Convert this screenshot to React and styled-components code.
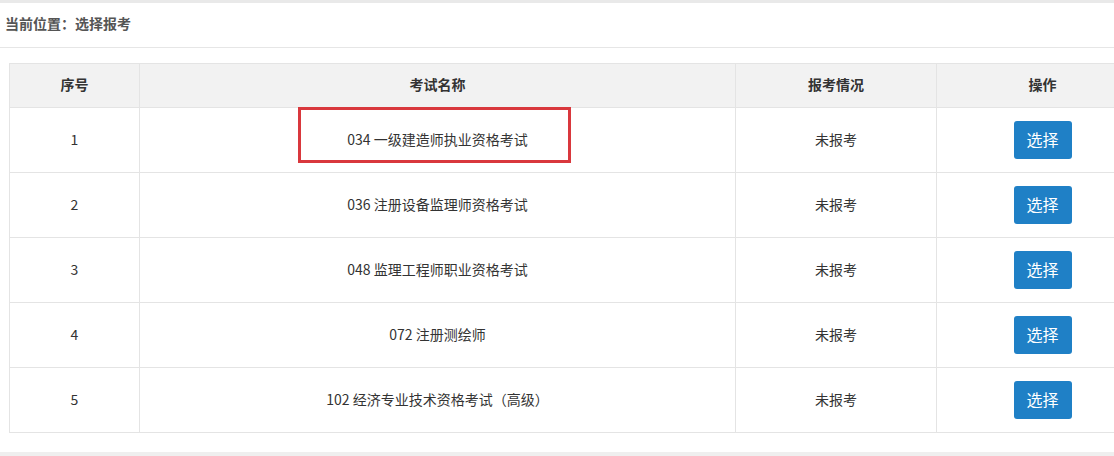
import React from "react";
import styled, { createGlobalStyle } from "styled-components";

const exams = [
  { id: 1, name: "034 一级建造师执业资格考试", marked: true },
  { id: 2, name: "036 注册设备监理师资格考试" },
  { id: 3, name: "048 监理工程师职业资格考试" },
  { id: 4, name: "072 注册测绘师" },
  { id: 5, name: "102 经济专业技术资格考试（高级）" },
];

function App() {
  return (
    <>
      <GlobalStyle />
      <Page>
        <Breadcrumb>当前位置：选择报考</Breadcrumb>
        <Content>
          <Table>
            <colgroup>
              <col style={{ width: 130 }} />
              <col style={{ width: 596 }} />
              <col style={{ width: 201 }} />
              <col style={{ width: 212 }} />
            </colgroup>
            <thead>
              <tr>
                <Th>序号</Th>
                <Th>考试名称</Th>
                <Th>报考情况</Th>
                <Th>操作</Th>
              </tr>
            </thead>
            <tbody>
              {exams.map((exam) => (
                <tr key={exam.id}>
                  <Td>{exam.id}</Td>
                  <NameCell>
                    {exam.name}
                    {exam.marked && <Highlight />}
                  </NameCell>
                  <Td>未报考</Td>
                  <ActionCell>
                    <SelectButton>选择</SelectButton>
                  </ActionCell>
                </tr>
              ))}
            </tbody>
          </Table>
        </Content>
        <Footer />
      </Page>
    </>
  );
}

const GlobalStyle = createGlobalStyle`
  body {
    margin: 0;
    background: #fff;
    overflow: hidden;
    font-family: "Noto Sans CJK SC", "Liberation Sans", sans-serif;
  }
`;

const Page = styled.div`
  width: 1160px;
  border-top: 3px solid #e9e9e9;
`;

const Breadcrumb = styled.div`
  height: 45px;
  box-sizing: border-box;
  padding: 0 0 4px 5px;
  display: flex;
  align-items: center;
  font-size: 14px;
  font-weight: bold;
  color: #555;
  border-bottom: 1px solid #e6e6e6;
`;

const Content = styled.div`
  padding: 15px 0 19px 9px;
`;

const Table = styled.table`
  border-collapse: collapse;
  table-layout: fixed;
  width: 1140px;
  border: 1px solid #e4e4e4;
  font-size: 14px;
  color: #333;
`;

const Th = styled.th`
  height: 40px;
  padding: 0 0 3px;
  background: #f2f2f2;
  border: 1px solid #e4e4e4;
  font-weight: bold;
  color: #333;
  text-align: center;
`;

const Td = styled.td`
  height: 62px;
  padding: 0 0 2px;
  border: 1px solid #e4e4e4;
  text-align: center;
  vertical-align: middle;
`;

const NameCell = styled(Td)`
  position: relative;
`;

const ActionCell = styled(Td)`
  height: 64px;
  padding: 0;
`;

const Highlight = styled.div`
  position: absolute;
  left: 158px;
  top: -1px;
  width: 273px;
  height: 56px;
  border: 3px solid #d9383d;
  box-sizing: border-box;
  pointer-events: none;
`;

const SelectButton = styled.button`
  width: 58px;
  height: 38px;
  padding: 0 0 2px;
  border: none;
  border-radius: 3px;
  background: #1f80c6;
  color: #fff;
  font-family: inherit;
  font-size: 16px;
  cursor: pointer;
`;

const Footer = styled.div`
  height: 6px;
  background: #efefef;
`;

export default App;
